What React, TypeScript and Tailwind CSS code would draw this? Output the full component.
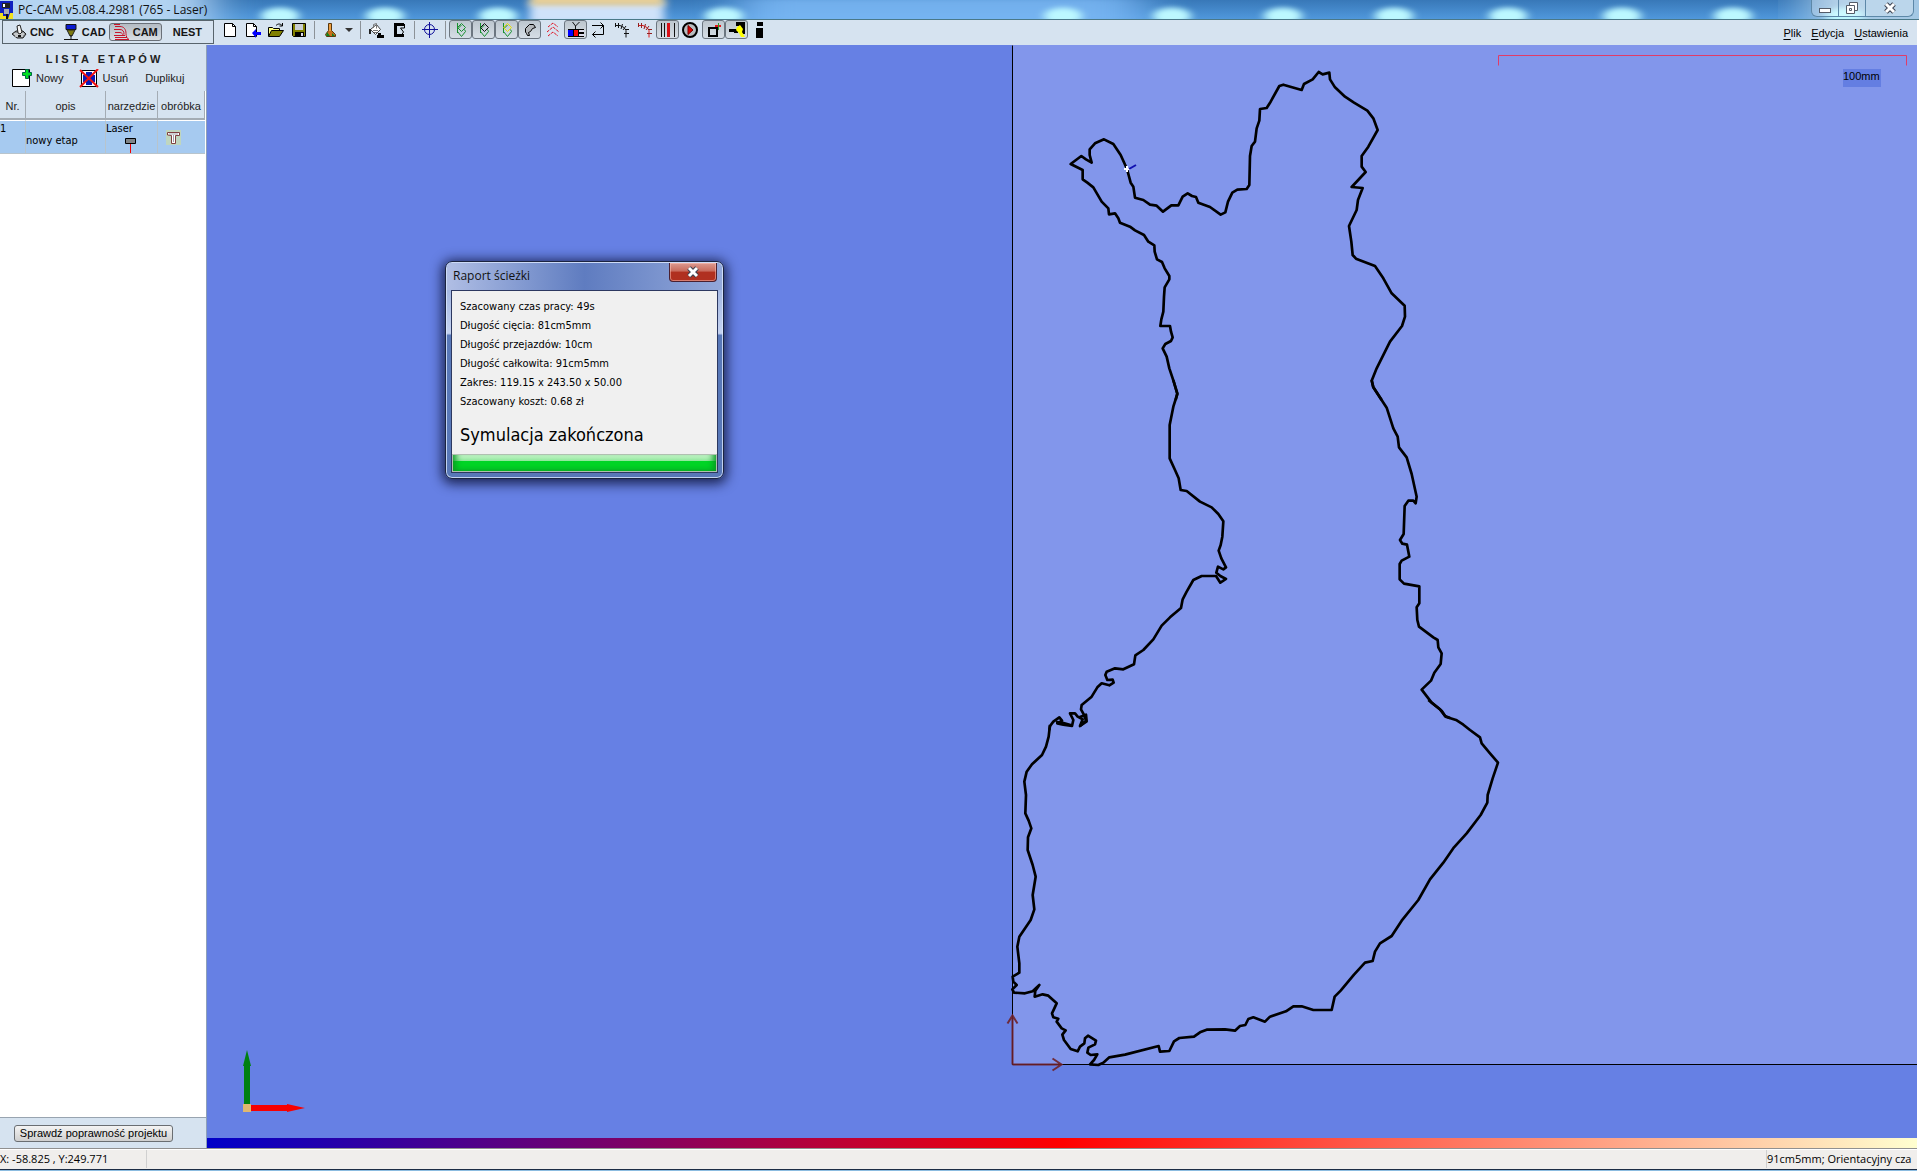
import React from "react";

const tahoma = "font-['DejaVu_Sans_Condensed','DejaVu_Sans',sans-serif]";

/* ---------- icons ---------- */

const Svg = ({ w = 16, h = 16, children }: { w?: number; h?: number; children: React.ReactNode }) => (
  <svg width={w} height={h} viewBox={`0 0 ${w} ${h}`} fill="none" aria-hidden="true" className="shrink-0">
    {children}
  </svg>
);

const CncIcon = () => (
  <Svg>
    <path d="M1 10l4-3h7l3 3-3 4H6z" fill="#8c9296" stroke="#222" />
    <path d="M3 10h10M4 12h8" stroke="#fff" />
    <path d="M6 2l3-1 2 7-2 2-2-1z" fill="#f4f4f4" stroke="#222" />
    <path d="M7 12h3" stroke="#111" strokeWidth="2" />
  </Svg>
);
const CadIcon = () => (
  <Svg>
    <path d="M3 .5h10v5H3z" fill="#0a1ad0" stroke="#111" />
    <path d="M4 6h8l-3 6H7z" fill="#7c7a10" stroke="#222" />
    <path d="M8 11v4M1 15.5h14" stroke="#111" />
  </Svg>
);
const CamIcon = () => (
  <Svg>
    <path d="M2 2.5h5c4 0 6 3 6 7 0 3 1 5 3 6M1 5.5h6c3 0 4 2 4 5M2 8.5h5c2 0 3 2 3 3M1 .5h6M1 11.5h11M2 13.5h12M2 15.5h14" stroke="#c8142a" />
  </Svg>
);
const NewIcon = () => (
  <Svg>
    <path d="M2.5 1.5h8l3 3v10h-11z" fill="#fff" stroke="#000" />
    <path d="M10.500 1.500v3h3" stroke="#000" />
  </Svg>
);
const ImportIcon = () => (
  <Svg>
    <path d="M1.500 1.500h7l3 3v10h-10z" fill="#fff" stroke="#000" />
    <path d="M8.500 1.500v3h3" stroke="#000" />
    <path d="M7 11l4-4v3h5v3h-5v3z" fill="#00f" />
  </Svg>
);
const OpenIcon = () => (
  <Svg>
    <path d="M.5 14V5.500h4l1 1h6v3" fill="#ffff80" stroke="#000" />
    <path d="M.5 14.500l3-6h12l-4 6z" fill="#808000" stroke="#000" />
    <path d="M8 3.500c2-2 4-2 6 0M14.500 1v3h-3" stroke="#000" />
  </Svg>
);
const SaveIcon = () => (
  <Svg>
    <path d="M1.500 1.500h13v13h-12l-1-1z" fill="#808000" stroke="#000" />
    <path d="M4 2h8v6H4z" fill="#c9ced4" />
    <path d="M4 10h9v5H4z" fill="#000" />
    <path d="M10 11h2v3h-2z" fill="#dde" />
  </Svg>
);
const BootIcon = () => (
  <Svg>
    <path d="M6.500 1.500h3v7l4 4v2h-9l-1-2 3-4z" fill="#c8701c" stroke="#5a3a10" />
    <path d="M7 2h2v7H7z" fill="#f0a040" />
    <path d="M5 10l3 4H4zM10 11l3 3h-3z" fill="#108020" />
  </Svg>
);
const BucketIcon = () => (
  <Svg>
    <path d="M2.500 7.500l6-5 4 5-5 5z" fill="#fff" stroke="#444" />
    <path d="M5.500 6V2.500l3-1v5M5 8.500h5M6 10.500h3" stroke="#777" />
    <path d="M10 11h3v2h3v3H9v-3h1z" fill="#000" />
    <path d="M2 7v5" stroke="#222" strokeWidth="2" />
  </Svg>
);
const FrameIcon = () => (
  <Svg>
    <path d="M13 2.500H4.500v11H9" stroke="#000" strokeWidth="3" />
    <path d="M13.500 2v4h-4l3 4-2 3" stroke="#000" />
    <path d="M9 12h4v3H9z" fill="#000" />
  </Svg>
);
const CrosshairIcon = () => (
  <Svg>
    <circle cx="7.500" cy="7.500" r="5" stroke="#10109a" />
    <path d="M7.500 0v16M0 7.500h16" stroke="#10109a" />
  </Svg>
);
const PathIcon = ({ top, side }: { top: string; side: string }) => (
  <Svg>
    <path d="M4.500 1v10M4.500 7l4-4" stroke={side} />
    <path d="M8.500 1.500l4 4-4 4-4-4z" stroke={top} />
    <path d="M4.500 9.500l4 5 4-5-1-2" stroke="#189030" />
  </Svg>
);
const HornIcon = () => (
  <Svg>
    <path d="M3.500 10V6.500l4-4h4l2 3-3 1-2 3-2 1 1 3h-2l-1-2z" fill="#b4b8bc" stroke="#000" />
  </Svg>
);
const ChevronsIcon = () => (
  <Svg>
    <path d="M3 5l5-4 5 4M2 10l6-5 6 5M3 14l5-4 5 4" stroke="#e01020" strokeDasharray="3 1" />
  </Svg>
);
const ToolTableIcon = () => (
  <Svg>
    <path d="M4.500 0l3 4 4-4M7.500 4v4" stroke="#111" />
    <path d="M0 7h16v8H0z" fill="#000" />
    <path d="M0 8h5v6H0z" fill="#00f" />
    <path d="M6 8h4v6H6z" fill="#f00" />
    <path d="M11 8h5v2h-5zM11 12h5v2h-5z" fill="#dde" />
  </Svg>
);
const LoopIcon = () => (
  <Svg>
    <path d="M1 3.500h11.500v9H1.500M9.500 0.500l3 3-3 3M4.500 9.500l-3 3 3 3" stroke="#000" />
  </Svg>
);
const TicksIcon = ({ a, b }: { a: string; b: string }) => (
  <Svg>
    <path d="M1 3.500h5l4 2 2 3v7" stroke={a} />
    <path d="M1.500 1v4M4.500 1v5M8.500 2L7 7M12 4l-3 4M15 7.500h-4M15 11.500h-5" stroke={b} />
  </Svg>
);
const BarsIcon = () => (
  <Svg>
    <path d="M1 1h1v14H1zM14 1h1v14h-1zM4 1h1v14H4z" fill="#111" />
    <path d="M7 1h3v14H7z" fill="#d81018" />
  </Svg>
);
const PlayIcon = () => (
  <Svg w={17}>
    <circle cx="8" cy="8" r="7" fill="#b8bcc0" stroke="#000" strokeWidth="2" />
    <path d="M6 3.500l5 4.500-5 4.500z" fill="#e00000" stroke="#700" />
  </Svg>
);
const StockIcon = () => (
  <Svg>
    <path d="M3 6h8v8H3z" stroke="#000" strokeWidth="2" />
    <path d="M9 4h6" stroke="#e01818" strokeWidth="2" />
    <path d="M12.500 1v7" stroke="#28a028" />
  </Svg>
);
const ClampIcon = () => (
  <Svg>
    <path d="M0 7h8v3H0zM7 0h9v4H7zM12 4h4v8h-4zM5 8h4v3H5z" fill="#000" />
    <path d="M8 5l3-2 3 4-1 3 3 5h-4l-2-4-3-3z" fill="#ff0" />
  </Svg>
);
const InfoIcon = () => (
  <Svg>
    <path d="M5 0h6v4H5zM4 6h7v10H4z" fill="#000" />
  </Svg>
);
const StageNewIcon = () => (
  <Svg w={20} h={18}>
    <path d="M.5.500h17v17H.5z" fill="#fff" stroke="#000" />
    <path d="M13.500.500h3v3h3v3h-3v3h-3v-3h-3v-3h3z" fill="#00e020" stroke="#064" />
  </Svg>
);
const StageDeleteIcon = () => (
  <Svg w={20} h={19}>
    <path d="M2.500 1.500h15v16h-15z" fill="#fff" stroke="#000" />
    <path d="M7 3h6v3h3v7h-3v3H7v-3H4V6h3z" fill="#0818b8" />
    <path d="M1 1l18 17M19 0L1 18" stroke="#f01010" strokeWidth="2" />
  </Svg>
);
const LaserIcon = () => (
  <Svg w={12} h={16}>
    <path d="M.5 1.500h10v5H.5z" fill="#808488" stroke="#000" />
    <path d="M5 7h1v9H5z" fill="#f00000" />
  </Svg>
);
const MachiningIcon = () => (
  <Svg w={15} h={15}>
    <path d="M0 0h15v15H0z" fill="#bfd6bf" />
    <path d="M1.500 5V2.500h12v3h-4v8h-4v-8z" fill="#fff" stroke="#804040" />
    <path d="M3 4h9M7.500 5v7" stroke="#a0a0a8" />
  </Svg>
);
const AppIcon = () => (
  <Svg w={13} h={18}>
    <path d="M0 0h13v18H0z" fill="#1020c0" />
    <path d="M2 2h8v5H2z" fill="#222" />
    <path d="M3 3h2v3H3z" fill="#fff" />
    <path d="M4 8h5v5H4z" fill="#a8acb0" />
    <path d="M0 12h3v3h3v3H0zM10 12h3v6H8z" fill="#f0e020" />
    <path d="M6 13h2v5H6z" fill="#111" />
  </Svg>
);
const CrossIcon = () => (
  <svg width={14} height={12} viewBox="0 0 14 12" aria-hidden="true">
    <path d="M3 2l8 8M11 2l-8 8" stroke="#3c4250" strokeWidth="5" />
    <path d="M3 2l8 8M11 2l-8 8" stroke="#fff" strokeWidth="3" />
  </svg>
);

/* ---------- title bar ---------- */

const glows = [280, 385, 498, 724, 1063, 1172, 1283, 1394, 1508, 1622, 1733, 1845];

function TitleBar() {
  return (
    <header className="relative flex h-[20px] items-center overflow-hidden border-b border-[#4a7888] bg-linear-to-b from-[#3878b8] to-[#5098dc]">
      <svg className="absolute inset-0 h-full w-full" viewBox="0 0 1919 20" preserveAspectRatio="none" aria-hidden="true">
        <defs>
          <filter id="soft" x="-50%" y="-100%" width="200%" height="300%" colorInterpolationFilters="sRGB">
            <feGaussianBlur stdDeviation="5 3" />
          </filter>
          <filter id="wide" x="-20%" y="-200%" width="140%" height="500%" colorInterpolationFilters="sRGB">
            <feGaussianBlur stdDeviation="24 4" />
          </filter>
        </defs>
        <rect x="-60" y="-10" width="270" height="42" fill="#b4d4f2" filter="url(#wide)" />
        <rect x="740" y="-4" width="400" height="30" fill="#80bcf8" opacity="0.8" filter="url(#wide)" />
        <rect x="1810" y="-10" width="160" height="42" fill="#a4c8e4" filter="url(#wide)" />
        {glows.map((x) => (
          <ellipse key={x} cx={x} cy="17" rx="19" ry="9" fill="#bcf8ff" filter="url(#soft)" />
        ))}
        <rect x="530" y="2" width="134" height="22" fill="#cfe2fa" filter="url(#soft)" />
        <rect x="530" y="-6" width="134" height="12" fill="#e8d098" filter="url(#soft)" />
      </svg>
      <div className="relative flex items-center gap-[5px]">
        <AppIcon />
        <h1 className="font-['Open_Sans','Noto_Sans',sans-serif] text-[12px] leading-[18px] text-[#111]">PC-CAM v5.08.4.2981 (765 - Laser)</h1>
      </div>
      <div className="relative mr-[5px] ml-auto flex h-[17px] self-start overflow-hidden rounded-b-md border border-t-0 border-[#5d88a8] bg-white/25">
        <button aria-label="Minimalizuj" className="flex w-[27px] items-center justify-center border-r border-[#5d88a8]">
          <Svg w={12} h={12}>
            <path d="M0 6h12v5H0z" fill="#555c68" />
            <path d="M1 7h10v3H1z" fill="#fff" />
          </Svg>
        </button>
        <button aria-label="Przywróć" className="flex w-[27px] items-center justify-center border-r border-[#5d88a8]">
          <Svg w={12} h={12}>
            <path d="M3.500.500h8v8h-8z" fill="#fff" stroke="#555c68" />
            <path d="M.5 3.500h8v8h-8z" fill="#fff" stroke="#555c68" />
            <path d="M3.500 6.500h2v2h-2z" stroke="#555c68" />
          </Svg>
        </button>
        <button aria-label="Zamknij" className="flex w-[47px] items-center justify-center">
          <CrossIcon />
        </button>
      </div>
    </header>
  );
}

/* ---------- toolbar ---------- */

type Tool = { label: string; icon: React.ReactNode; on?: boolean };

const fileTools: Tool[] = [
  { label: "Nowy projekt", icon: <NewIcon /> },
  { label: "Importuj", icon: <ImportIcon /> },
  { label: "Otwórz", icon: <OpenIcon /> },
  { label: "Zapisz", icon: <SaveIcon /> },
];
const editTools: Tool[] = [
  { label: "Wypełnij", icon: <BucketIcon /> },
  { label: "Obszar", icon: <FrameIcon /> },
];
const viewTools: Tool[] = [
  { label: "Ścieżka", icon: <PathIcon top="#189030" side="#189030" />, on: true },
  { label: "Kontur", icon: <PathIcon top="#111" side="#189030" />, on: true },
  { label: "Podświetl", icon: <PathIcon top="#e8e000" side="#189030" />, on: true },
  { label: "Bryła", icon: <HornIcon />, on: true },
  { label: "Przejścia", icon: <ChevronsIcon /> },
  { label: "Narzędzia", icon: <ToolTableIcon />, on: true },
  { label: "Kolejność", icon: <LoopIcon /> },
  { label: "Punkty", icon: <TicksIcon a="#111" b="#111" /> },
  { label: "Kierunki", icon: <TicksIcon a="#e01818" b="#902020" /> },
  { label: "Linie", icon: <BarsIcon />, on: true },
  { label: "Symulacja", icon: <PlayIcon /> },
  { label: "Materiał", icon: <StockIcon />, on: true },
  { label: "Uchwyt", icon: <ClampIcon />, on: true },
  { label: "Informacje", icon: <InfoIcon /> },
];

const ToolGroup = ({ tools }: { tools: Tool[] }) => (
  <div className="flex">
    {tools.map((t) => (
      <button
        key={t.label}
        aria-label={t.label}
        aria-pressed={t.on}
        className={
          t.on
            ? "flex h-[19px] w-[23px] items-center justify-center rounded-[3px] border border-[#6c7680] bg-linear-to-b from-[#bcc6ce] to-[#d6dee6]"
            : "flex h-[19px] w-[23px] items-center justify-center"
        }
      >
        {t.icon}
      </button>
    ))}
  </div>
);

const Sep = () => <div className="mr-[3px] ml-1 h-[18px] w-px bg-[#8c9298]" />;

function Toolbar() {
  return (
    <div className="flex h-[25px] items-start bg-[#d6e3f0] pr-[9px] text-[11px]">
      <nav className="ml-[2px] flex h-[24px] w-[212px] items-center border border-[#58646c] pl-[8px] font-bold text-[#151515]">
        <button className="flex items-center gap-[3px] pr-[9px]">
          <CncIcon />
          CNC
        </button>
        <button className="flex items-center gap-[3px] pr-[3px]">
          <CadIcon />
          CAD
        </button>
        <button aria-pressed="true" className="flex h-[18px] items-center gap-1 rounded-[3px] border border-[#6a7078] bg-linear-to-b from-[#b4bcc4] to-[#d8dee4] px-[3px]">
          <CamIcon />
          CAM
        </button>
        <button className="pl-[11px]">NEST</button>
      </nav>
      <div className="ml-[4px] flex items-center">
        <ToolGroup tools={fileTools} />
        <Sep />
        <div className="flex">
          <button aria-label="Frez" className="flex h-[19px] w-[23px] items-center justify-center">
            <BootIcon />
          </button>
          <button aria-label="Więcej" className="flex h-[19px] w-[15px] items-center justify-center">
            <Svg w={8} h={4}>
              <path d="M0 0h8L4 4z" fill="#333" />
            </Svg>
          </button>
        </div>
        <Sep />
        <ToolGroup tools={editTools} />
        <Sep />
        <ToolGroup tools={[{ label: "Centruj", icon: <CrosshairIcon /> }]} />
        <Sep />
        <ToolGroup tools={viewTools} />
      </div>
      <nav className="ml-auto flex gap-[10px] self-center text-black">
        {["Plik", "Edycja", "Ustawienia"].map((m) => (
          <button key={m} className="leading-[14px]">
            <span className="underline underline-offset-2">{m[0]}</span>
            {m.slice(1)}
          </button>
        ))}
      </nav>
    </div>
  );
}

/* ---------- sidebar ---------- */

function Sidebar() {
  return (
    <aside className="flex w-[207px] shrink-0 flex-col border-r border-[#8ea0b8] bg-[#d6e3f0] text-[11px] text-black">
      <h2 className="mt-[7px] text-center text-[11px] leading-[14px] font-bold whitespace-pre text-[#222]">L I S T A   E T A P Ó W</h2>
      <div className="mt-[2px] flex h-[20px] items-center pl-[12px] text-[#222]">
        <button className="flex items-center gap-1">
          <StageNewIcon />
          Nowy
        </button>
        <button className="ml-[15px] flex items-center gap-1">
          <StageDeleteIcon />
          Usuń
        </button>
        <button className="ml-[17px]">Duplikuj</button>
      </div>
      <div className="mt-[3px] flex-1 border-b border-[#98a4b0] bg-white">
        <table className="w-[205px] table-fixed border-separate border-spacing-0">
          <thead>
            <tr className="h-[29px] bg-[#d6e3f0] text-[#222]">
              <th className="w-[26px] border-r border-b-2 border-[#a4acb4] p-0 pt-[3px] font-normal">Nr.</th>
              <th className="w-[80px] border-r border-b-2 border-[#a4acb4] p-0 pt-[3px] font-normal">opis</th>
              <th className="w-[52px] border-r border-b-2 border-[#a4acb4] p-0 pt-[3px] font-normal">narzędzie</th>
              <th className="border-r border-b-2 border-[#a4acb4] p-0 pt-[3px] font-normal">obróbka</th>
            </tr>
          </thead>
          <tbody className={tahoma}>
            <tr className="h-[34px] bg-[#a6caf0]">
              <td className="border-t border-r border-b border-t-white border-[#b8c4cc] p-0 align-top leading-[16px]">1</td>
              <td className="border-t border-r border-b border-t-white border-[#b8c4cc] p-0 pt-2">nowy etap</td>
              <td className="border-t border-r border-b border-t-white border-[#b8c4cc] p-0 align-top leading-[16px]">
                Laser
                <div className="flex pl-[19px]">
                  <LaserIcon />
                </div>
              </td>
              <td className="border-t border-b border-t-white border-[#b8c4cc] p-0 pl-[8px]">
                <MachiningIcon />
              </td>
            </tr>
          </tbody>
        </table>
      </div>
      <div className="flex h-[30px] items-center pl-[14px]">
        <button className="h-[17px] w-[159px] rounded-[3px] border border-[#6a6e72] bg-linear-to-b from-[#f4f4f4] to-[#cfcfcf] text-[11px] leading-[15px] whitespace-nowrap">
          Sprawdź poprawność projektu
        </button>
      </div>
    </aside>
  );
}

/* ---------- canvas ---------- */

/* Contour points, three units per screen pixel; each section has its own origin. */
const northWest =
  "527,1050 532,1030 518,985 508,955 500,920 488,895 496,882 513,873 518,862 513,845 510,828 481,828 484,808 490,785 492,740 494,712 508,688 508,678 494,655 486,636 471,628 464,605 463,586 445,575 432,555 405,541 390,530 360,518 355,505 345,490 327,493 325,475 305,455 280,412 262,398 248,388 248,360 212,342 244,318 258,328 275,338 269,315 269,298 285,280 312,268 340,282 362,315 381,357 392,398 400,410 405,443 430,450 450,464 470,467 489,485 514,466 535,466 548,440 563,430 576,438 588,441 595,458 630,471 662,494 676,487 684,455 697,428 712,419 740,417 748,405 750,318 755,288 765,275 770,235 778,212 780,177 800,174 812,155 838,108 850,104 905,120 912,102 938,88 956,66 968,73 988,68 990,88 1005,112 1035,140 1062,158 1102,182 1120,205 1133,240 1105,290 1085,318 1085,350 1097,366 1055,411 1088,414 1074,450 1070,480 1047,528 1054,575 1058,615 1068,626 1125,648 1150,685 1175,730 1214,767 1215,800 1206,828 1170,875 1130,955 1115,992 1120,1012 1145,1050";
const middleEast =
  "1115,0 1120,22 1160,83 1180,145 1193,170 1197,202 1220,232 1235,282 1250,350 1247,370 1240,362 1225,362 1214,378 1211,462 1200,480 1207,491 1221,494 1228,530 1205,542 1199,552 1199,598 1212,611 1258,619 1258,670 1250,682 1252,720 1257,740 1300,772 1313,780 1315,802 1325,820 1322,852 1303,878 1293,902 1265,929 1295,968 1320,988 1335,1008 1350,1014";
const middleWest =
  "520,0 532,42 520,80 509,135 509,235 525,270 536,295 542,330 560,333 600,365 635,382 655,402 670,424 667,470 662,495 656,512 664,535 678,562 670,568 654,560 649,578 661,588 678,597 661,608 648,588 605,588 580,600 560,635 548,658 543,684 510,712 485,737 460,778 430,810 406,826 402,853 370,868 345,865 320,875 316,885 322,900 338,899 341,908 328,916 305,910 292,922 275,950 245,975 243,988 252,1005 258,1022 240,1038 248,1018 233,1010 225,1000 210,1000 220,1020 216,1038 190,1034 172,1030 186,1022 178,1012 160,1025 150,1038 148,1050";
const southWest =
  "150,75 146,110 138,140 126,165 96,193 80,215 73,245 78,285 76,340 86,362 94,385 84,412 83,450 98,495 107,530 98,585 103,628 92,660 58,710 52,740 58,790 58,818 38,830 40,845 50,855 37,868 42,878 75,880 98,874 118,855 106,872 104,890 128,883 145,887 170,910 156,940 160,952 175,956 170,965 185,985 197,991 187,1004 192,1020 212,1047 233,1054 240,1040 253,1030 255,1015 264,1007 288,1022 285,1033 265,1043 262,1058 272,1065 292,1063 282,1080 270,1093 295,1095 310,1088 328,1072 375,1064 476,1038 480,1055 508,1053 522,1024 538,1014 582,1010 600,997 620,989 675,988 705,992 720,978 736,975 745,957 760,952 795,965 810,950 858,934 880,919 905,919 940,930 995,930 1004,890 1022,872 1062,824 1095,788 1118,783 1125,755 1140,730 1175,708 1205,662 1255,600 1290,538 1330,488 1362,442 1400,400 1442,345 1462,308 1463,285 1478,235 1494,188 1470,160 1445,130 1440,112 1410,90 1390,74 1368,60 1337,50 1325,32 1285,0";

function Drawing() {
  return (
    <svg className="absolute inset-0 h-full w-full" viewBox="207 45 1710 1093" preserveAspectRatio="xMinYMin slice" fill="none" role="img" aria-label="Ścieżka cięcia">
      <rect x="1012" y="45" width="1000" height="1019" fill="#8296eb" />
      <path d="M1012 45V1064H2100" stroke="#000" transform="translate(.5 .5)" />
      <path d="M1498 65V55H1906V65" stroke="#e03c68" transform="translate(.5 .5)" />
      <g stroke="#000" strokeWidth="8" strokeLinejoin="round">
        <g transform="translate(1000 50) scale(.33333)">
          <polyline points={northWest} />
        </g>
        <g transform="translate(1000 380) scale(.33333)">
          <polyline points={middleEast} />
          <polyline points={middleWest} />
          <path d="M168 1026l20 2 26 8M238 1012l20-8 2 20-20 14" />
        </g>
        <g transform="translate(1000 700) scale(.33333)">
          <polyline points={southWest} />
        </g>
      </g>
      <path d="M1124 169h6M1127 166v6" stroke="#fff" strokeWidth="2" />
      <path d="M1129 169l7-4" stroke="#1010b0" strokeWidth="2" />
      <path d="M1012 1064V1016M1007 1023l5-8 5 8M1012 1064h48M1052 1058l9 6-9 6" stroke="#6e2028" strokeOpacity=".9" strokeWidth="2" transform="translate(.5 .5)" />
      <path d="M244 1104v-38h-1l4-16 4 16h-1v38z" fill="#008010" />
      <path d="M250 1105h37v-1l18 4-18 4v-1h-37z" fill="#f80000" />
      <path d="M243 1104h8v8h-8z" fill="#e0b870" />
    </svg>
  );
}

const report = [
  "Szacowany czas pracy: 49s",
  "Długość cięcia: 81cm5mm",
  "Długość przejazdów: 10cm",
  "Długość całkowita: 91cm5mm",
  "Zakres: 119.15 x 243.50 x 50.00",
  "Szacowany koszt: 0.68 zł",
];

function ReportDialog() {
  return (
    <section
      role="dialog"
      aria-label="Raport ścieżki"
      className="absolute top-[216px] left-[238px] w-[279px] rounded-[7px] border border-[#1c2440] bg-linear-to-b from-[#8fa6d8] from-0% via-[#c4d2f0] via-33% to-[#5878b8] to-34% p-[5px] pt-0 shadow-[0_2px_12px_3px_rgba(10,15,50,0.8),inset_0_0_0_1px_rgba(220,232,255,0.8)]"
    >
      <div className="mx-[-4px] mt-px flex h-[27px] items-start rounded-t-[5px] bg-linear-to-r from-[#b0bee4] via-[#5f7cc0] to-[#93a8da] pl-[6px]">
        <h2 className="mt-[4px] font-['Open_Sans','Noto_Sans',sans-serif] text-[12px] leading-[18px] text-[#111]">Raport ścieżki</h2>
        <button
          aria-label="Zamknij raport"
          className="mr-[5px] ml-auto flex h-[19px] w-[48px] items-center justify-center rounded-b-[4px] border border-t-0 border-[#4a2030] bg-linear-to-b from-[#dc9a90] from-0% via-[#c86a5c] via-45% to-[#b03020] to-50% shadow-[inset_0_0_0_1px_rgba(255,200,190,0.5)]"
        >
          <CrossIcon />
        </button>
      </div>
      <div className={`${tahoma} border border-[#2c3860] bg-[#f0f0f0] pt-[6px] text-[11px] text-black`}>
        <ul className="px-[8px] leading-[19px]">
          {report.map((line) => (
            <li key={line}>{line}</li>
          ))}
        </ul>
        <p className="mt-[12px] px-[8px] text-[18px] leading-[24px] whitespace-nowrap">Symulacja zakończona</p>
        <div
          role="progressbar"
          aria-label="Postęp symulacji"
          aria-valuenow={100}
          aria-valuemin={0}
          aria-valuemax={100}
          className="mt-[7px] h-[18px] border border-[#b0c0b0] bg-linear-to-b from-[#c8f4cc] from-0% via-[#90e89c] via-35% to-[#00d426] to-36% shadow-[inset_6px_-2px_6px_-3px_#0a9a24,inset_-6px_-2px_6px_-3px_#0a9a24]"
        />
      </div>
    </section>
  );
}

function Canvas() {
  return (
    <main className="flex min-w-0 flex-1 flex-col">
      <div className="relative flex-1 overflow-hidden bg-[#6680e4]">
        <Drawing />
        <span className="absolute top-[24px] right-[36px] h-[18px] w-[38px] bg-[#647ee2] text-[11px] leading-[15px] text-black">100mm</span>
        <ReportDialog />
      </div>
      <div className="h-[10px] bg-linear-to-r/srgb from-[#0000c8] via-[#ff0000] to-[#ffffd0]" />
    </main>
  );
}

function StatusBar() {
  return (
    <footer className="flex h-[23px] shrink-0 flex-col">
      <div className="flex h-[21px] items-center overflow-hidden border-t border-[#909090] bg-[#f0eeec] font-['Open_Sans','Noto_Sans',sans-serif] text-[11px] leading-[18px] text-black shadow-[inset_0_1px_0_#fff]">
        <span className="w-[147px] border-r border-[#d0d0d0]">X: -58.825 , Y:249.771</span>
        <span className="ml-auto w-[151px] border-l border-[#d0d0d0] whitespace-nowrap">91cm5mm; Orientacyjny cza</span>
      </div>
      <div className="h-[2px] border-t border-[#1c2c44] bg-[#8cbce0]" />
    </footer>
  );
}

export default function App() {
  return (
    <div className="flex h-screen flex-col overflow-hidden bg-white font-['Liberation_Sans',Arial,sans-serif]">
      <TitleBar />
      <div className="mr-[2px] flex min-h-0 flex-1 flex-col">
        <Toolbar />
        <div className="flex min-h-0 flex-1">
          <Sidebar />
          <Canvas />
        </div>
        <StatusBar />
      </div>
    </div>
  );
}
